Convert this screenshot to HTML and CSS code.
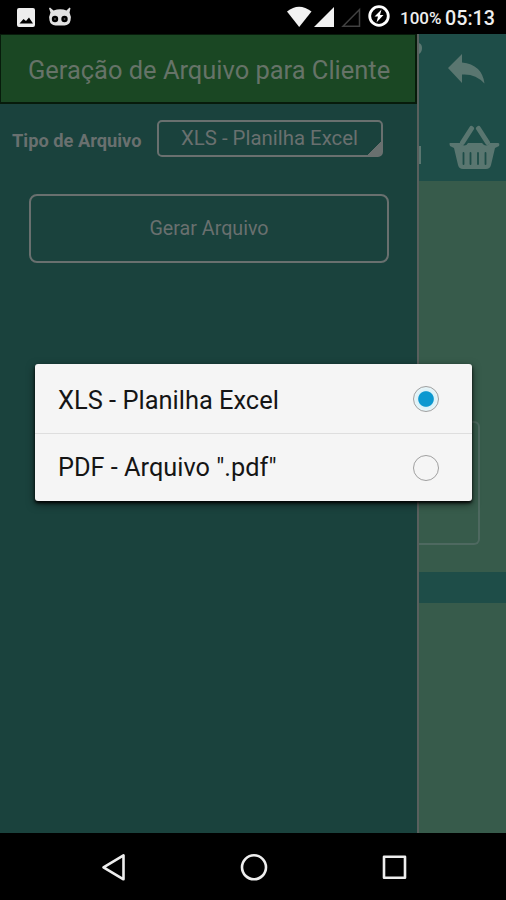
FILE: index.html
```html
<!DOCTYPE html>
<html lang="pt-BR">
<head>
<meta charset="utf-8">
<title>Geração de Arquivo</title>
<link rel="stylesheet" href="styles.css">
</head>
<body>
<div class="phone">
  <header class="status">
    <svg class="notices" width="64" height="34" viewBox="0 0 64 34">
      <path fill="#eee" fill-rule="evenodd" d="M3 8h14q2 0 2 2v15q0 2-2 2H3q-2 0-2-2V10q0-2 2-2zM3.500 23.500h13.500l-4-6-3 3.500-2.500-2z"/>
      <path fill="#e2e2e2" d="M34 7.500l3.500 3q7-2.500 13 0l3-3 1 .7-1 4.300q2 4 1 8-1 4.500-6 5h-9q-5-.5-6-5-1-4 1-8L33 8.200z"/>
      <circle cx="39" cy="19" r="3.200"/><circle cx="48.500" cy="19" r="3.200"/>
      <circle cx="39" cy="19" r=".9" fill="#555"/><circle cx="48.500" cy="19" r=".9" fill="#555"/>
    </svg>
    <svg class="signals" width="106" height="34" viewBox="0 0 106 34">
      <path fill="#f2f2f2" d="M0 11.500Q12 2 24.500 11.500L12.200 27z"/>
      <path fill="#f2f2f2" d="M47 7v20H27z"/>
      <path fill="none" stroke="#414141" stroke-width="1.500" d="M72.500 9.500v16.700H56z"/>
      <circle cx="92" cy="16" r="9.300" fill="none" stroke="#fff" stroke-width="2.800"/>
      <path fill="#fff" d="M94.500 9.500l-7 7h3.500l-1.500 6 7-7.500H93z"/>
    </svg>
    <span class="battery">100%</span>
    <span class="clock">05:13</span>
  </header>

  <main class="app">
    <section class="drawer">
      <h1 class="title">Geração de Arquivo para Cliente</h1>
      <div class="field">
        <span class="label">Tipo de Arquivo</span>
        <div class="select"><span class="select-text">XLS - Planilha Excel</span></div>
      </div>
      <div class="generate"><span class="generate-text">Gerar Arquivo</span></div>
    </section>
    <aside class="page">
      <div class="toolbar">
        <svg width="87" height="147" viewBox="419 34 87 147">
          <path fill="#5a7670" d="M419 43q3 1 3 5t-3 6zM419 146h2v18h-2z"/>
          <path fill="#5a7670" d="M448 68l14-14v8.500q20 2 22.500 21-9-10-22.500-9v8.500z"/>
          <path fill="none" stroke="#5a7670" stroke-width="5" stroke-linecap="round" d="M471.500 128.500l-9 14M478.500 128.500l9 14"/>
          <path fill="#5a7670" d="M450 143h10q5 5 8 0h14q4 5 8 0h8q2 0 1 3l-4 2-4 17q-1 4-5 4h-23q-4 0-5-4l-4-17-4-2q-1-3 0-3z"/>
          <path stroke="#1e4d48" stroke-width="1.800" stroke-linecap="round" d="M463.500 153v11M470.500 153v11M478 153v11M485.500 153v11"/>
        </svg>
      </div>
      <div class="card"></div>
      <div class="band"></div>
    </aside>
  </main>

  <nav class="nav">
    <svg width="506" height="67" viewBox="0 833 506 67" fill="none" stroke="#eee" stroke-width="2.600" stroke-linejoin="round">
      <path d="M103.500 867.300l20-12v24z"/>
      <circle cx="254" cy="867.300" r="12"/>
      <rect x="384" y="856.800" width="21" height="21"/>
    </svg>
  </nav>

  <div class="dialog">
    <div class="option"><span class="option-text">XLS - Planilha Excel</span><span class="radio checked"></span></div>
    <div class="option"><span class="option-text">PDF - Arquivo ".pdf"</span><span class="radio"></span></div>
  </div>
</div>
</body>
</html>
```

FILE: styles.css
```css
* { box-sizing: border-box; }
body { margin: 0; background: #000; font-family: Roboto, "Liberation Sans", sans-serif; }
svg { display: block; }
.phone { position: relative; width: 506px; height: 900px; overflow: hidden; display: flex; flex-direction: column; background: #000; }
.status { height: 34px; display: flex; align-items: center; padding: 0 11px 0 16px; color: #eee; white-space: nowrap; }
.signals { margin-left: auto; }
.battery { width: 40px; margin: 2px 5px 0 7px; font-size: 17px; font-weight: 500; }
.clock { width: 50px; margin-top: 2px; font-size: 19.7px; font-weight: 500; }
.app { height: 799px; display: flex; }
.drawer { width: 419px; border-right: 2px solid #59605e; background: #1a423d; color: #69706f; }
.title { height: 70px; margin: 0; padding: 1px 0 0 27px; border: solid #071b0b; border-width: 1px 2px 2px 1px; background: #1a4723; color: #667368; font-size: 25.45px; font-weight: 400; line-height: 68px; white-space: nowrap; }
.field { display: flex; align-items: center; height: 38px; margin-top: 15px; padding-left: 12px; }
.label { width: 145px; padding-top: 5px; font-size: 18.25px; font-weight: 700; white-space: nowrap; }
.select { width: 226px; height: 37px; border: 2px solid #69706f; border-radius: 5px; padding-left: 22px; line-height: 33px; font-size: 20.4px; white-space: nowrap; background: linear-gradient(135deg, transparent 50%, #69706f 50%) right bottom / 14px 14px no-repeat; }
.generate { width: 360px; height: 69px; margin: 37px 0 0 29px; border: 2.5px solid #69706f; border-radius: 8px; display: flex; align-items: center; justify-content: center; font-size: 19.7px; }
.page { width: 87px; background: #375b4b; }
.toolbar { height: 147px; background: #1e4d48; }
.card { width: 61px; height: 124px; margin-top: 240px; border: 2px solid #4e6960; border-left: 0; border-radius: 0 6px 6px 0; }
.band { height: 31px; margin-top: 27px; background: #1e4d48; }
.nav { height: 67px; }
.dialog { position: absolute; left: 35px; top: 364px; width: 437px; height: 137px; border-radius: 3px; background: #f5f5f5; box-shadow: 0 2px 3px rgba(0,0,0,.9), 0 3px 9px rgba(0,0,0,.55); }
.option { height: 69px; padding: 1px 33px 0 23px; display: flex; align-items: center; justify-content: space-between; color: #151515; font-size: 25.45px; white-space: nowrap; }
.option + .option { height: 68px; border-top: 1px solid #dedede; padding-top: 0; }
.option-text { padding-top: 1px; }
.option + .option .option-text { padding-top: 0; font-size: 25.3px; }
.radio { width: 26px; height: 26px; border: 1.5px solid #a0a0a0; border-radius: 50%; }
.checked { background: radial-gradient(circle, #0b98d0 7.3px, #d9f1f8 8.3px, #e5f4f8 11px); }
```
